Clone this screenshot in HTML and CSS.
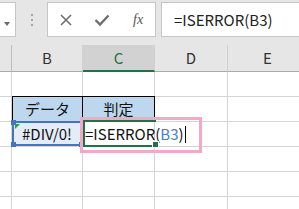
FILE: index.html
```html
<!DOCTYPE html>
<html>
<head>
  <meta charset="utf-8">
  <title>ISERROR</title>
  <link rel="stylesheet" href="styles.css">
</head>
<body>
<div class="toolbar">
  <div class="name-box"><span class="drop"></span></div>
  <div class="grip"><i></i><i></i><i></i></div>
  <div class="fx-box">
    <svg class="ico" width="14" height="14" viewBox="0 0 14 14"><path d="M2 2 L12 12 M12 2 L2 12" stroke="#6f6f6f" stroke-width="1.6" fill="none"/></svg>
    <svg class="ico" width="16" height="14" viewBox="0 0 16 14"><path d="M1.5 7 L6 11.5 L14.5 2.5" stroke="#6f6f6f" stroke-width="2.4" fill="none"/></svg>
    <span class="fx">fx</span>
  </div>
  <div class="formula">=ISERROR(B3)</div>
</div>

<div class="sheet">
  <div class="hd"></div>
  <div class="hd">B</div>
  <div class="hd sel">C</div>
  <div class="hd">D</div>
  <div class="hd">E</div>

  <div class="c"></div><div class="c"></div><div class="c"></div><div class="c"></div><div class="c"></div>

  <div class="c"></div>
  <div class="c th">データ</div>
  <div class="c th">判定</div>
  <div class="c"></div><div class="c"></div>

  <div class="c"></div>
  <div class="c data">#DIV/0!</div>
  <div class="c edit">=ISERROR(<span class="ref">B3</span>)<span class="caret"></span></div>
  <div class="c"></div><div class="c"></div>

  <div class="c"></div><div class="c"></div><div class="c"></div><div class="c"></div><div class="c"></div>
  <div class="c"></div><div class="c"></div><div class="c"></div><div class="c"></div><div class="c"></div>
  <div class="c"></div><div class="c"></div><div class="c"></div><div class="c"></div><div class="c"></div>

  <div class="ref-box"><b class="h tl"></b><b class="h bl"></b><b class="h br"></b><b class="tri"></b></div>
  <div class="edit-box"><b class="fill"></b></div>
  <div class="mark"></div>
</div>
</body>
</html>
```

FILE: styles.css
```css
html, body {
  margin: 0;
  padding: 0;
  height: 209px;
  background: #fff;
  font-family: "Noto Sans CJK JP", "Liberation Sans", sans-serif;
  overflow: hidden;
}

.toolbar {
  display: flex;
  align-items: flex-start;
  height: 45px;
  padding-top: 2px;
  background: #e6e6e6;
  box-sizing: border-box;
}
.name-box {
  position: relative;
  width: 17px;
  height: 35px;
  margin-left: -1px;
  background: #fff;
  border: 1px solid #c6c6c6;
  box-sizing: border-box;
}
.drop {
  position: absolute;
  left: 4px;
  top: 19px;
  border-left: 3px solid transparent;
  border-right: 3px solid transparent;
  border-top: 4px solid #6a6a6a;
}
.grip {
  width: 31px;
  height: 35px;
  display: flex;
  flex-direction: column;
  align-items: center;
  justify-content: center;
  gap: 3px;
}
.grip i {
  width: 2px;
  height: 2px;
  background: #a6a6a6;
}
.fx-box {
  display: flex;
  align-items: center;
  width: 109px;
  height: 35px;
  background: #fff;
  border: 1px solid #c6c6c6;
  box-sizing: border-box;
  padding-left: 11px;
  gap: 21px;
}
.fx {
  font-family: "Liberation Serif", serif;
  font-style: italic;
  font-size: 14px;
  color: #555;
  margin-left: 2px;
}
.formula {
  flex: 1;
  height: 35px;
  margin-left: 5px;
  margin-right: -2px;
  background: #fff;
  border: 1px solid #c6c6c6;
  box-sizing: border-box;
  padding-left: 12px;
  font-size: 15px;
  line-height: 33px;
  color: #222;
}

.sheet {
  position: relative;
  height: 164px;
  overflow: hidden;
  display: grid;
  grid-template-columns: 12px 71px 72px 73px 80px;
  grid-template-rows: 27px repeat(6, 25px);
  font-size: 15px;
}
.hd {
  background: #e6e6e6;
  border-right: 1px solid #d0d0d0;
  border-bottom: 1px solid #ababab;
  text-align: center;
  line-height: 26px;
  color: #333;
  box-sizing: border-box;
}
.hd:first-child { border-right-color: #bdbdbd; }
.hd.sel {
  background: #d2d2d2;
  color: #217346;
  border-bottom: 2px solid #217346;
}
.c {
  border-right: 1px solid #d4d4d4;
  border-bottom: 1px solid #d4d4d4;
  box-sizing: border-box;
  line-height: 24px;
  white-space: nowrap;
  color: #111;
}
.th {
  background: #bdd7ee;
  border: 1px solid #000;
  border-left: 0;
  text-align: center;
  margin-top: -1px;
  height: 26px;
}
.th:nth-child(12) { border-left: 1px solid #000; }
.data {
  background: #e3ecf7;
  text-align: center;
}
.edit {
  position: relative;
  z-index: 3;
  overflow: visible;
  padding-left: 2px;
  background: #fff;
}
.ref { color: #4a7bd0; }
.caret {
  display: inline-block;
  width: 1px;
  height: 17px;
  background: #000;
  vertical-align: -3px;
  margin-left: 1px;
}

.ref-box {
  position: absolute;
  left: 12px;
  top: 76px;
  width: 71px;
  height: 25px;
  border: 2px solid #4472c4;
  box-sizing: border-box;
  z-index: 2;
}
.h {
  position: absolute;
  width: 5px;
  height: 5px;
  background: #4472c4;
}
.tl { left: -3px; top: -3px; }
.bl { left: -3px; bottom: -3px; }
.br { right: -3px; bottom: -3px; }
.tri {
  position: absolute;
  left: 1px;
  top: 1px;
  border-top: 5px solid #2a9d3c;
  border-right: 5px solid transparent;
}
.edit-box {
  position: absolute;
  left: 83px;
  top: 75px;
  width: 73px;
  height: 27px;
  border: 2px solid #217346;
  border-right: 0;
  box-sizing: border-box;
  z-index: 4;
}
.fill {
  position: absolute;
  right: -3px;
  bottom: -3px;
  width: 5px;
  height: 5px;
  background: #217346;
  border: 1px solid #fff;
}
.mark {
  position: absolute;
  left: 80px;
  top: 72px;
  width: 122px;
  height: 36px;
  border: 3px solid #f3a8c8;
  box-sizing: border-box;
  z-index: 5;
}
```
